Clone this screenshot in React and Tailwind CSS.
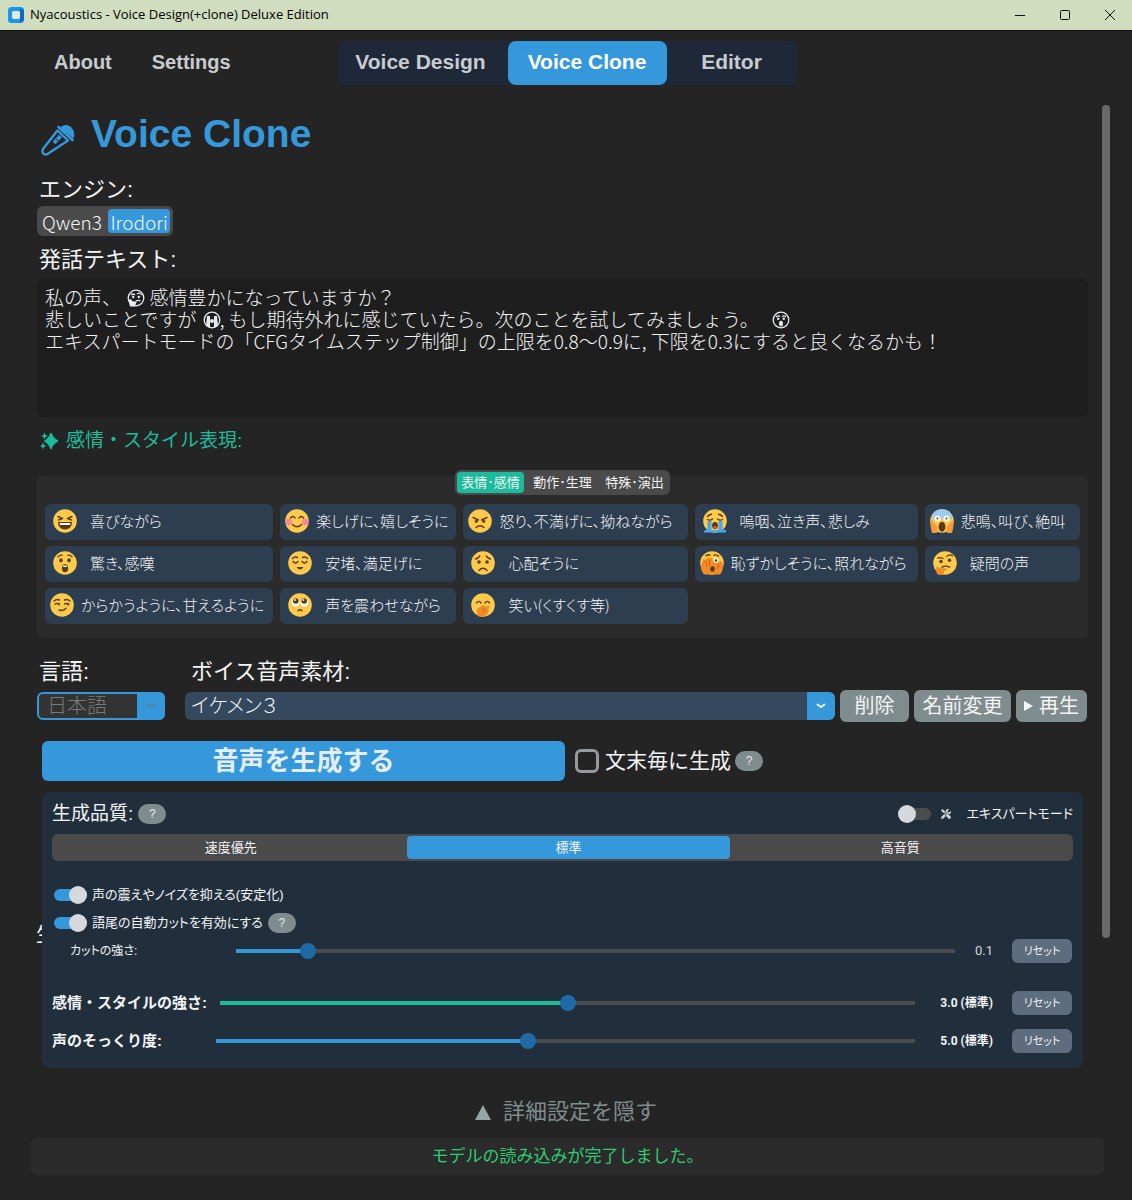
import React, { useState } from 'react';
import { FaTools } from 'react-icons/fa';

const EMOTIONS = [
  { face: 'laugh', label: '喜びながら' },
  { face: 'blush', label: '楽しげに、嬉しそうに' },
  { face: 'angry', label: '怒り、不満げに、拗ねながら' },
  { face: 'sob', label: '嗚咽、泣き声、悲しみ' },
  { face: 'scream', label: '悲鳴、叫び、絶叫' },
  { face: 'astonished', label: '驚き、感嘆' },
  { face: 'relieved', label: '安堵、満足げに' },
  { face: 'worried', label: '心配そうに' },
  { face: 'peek', label: '恥ずかしそうに、照れながら' },
  { face: 'thinking', label: '疑問の声' },
  { face: 'smirk', label: 'からかうように、甘えるように' },
  { face: 'pleading', label: '声を震わせながら' },
  { face: 'giggle', label: '笑い(くすくす等)' },
];

// 詰めて表示するボタン
const TIGHT = ['blush', 'angry', 'scream', 'peek', 'smirk'];

const SPEECH_TEXT =
  '私の声、　　感情豊かになっていますか？\n' +
  '悲しいことですが 　, もし期待外れに感じていたら。次のことを試してみましょう。\n' +
  'エキスパートモードの「CFGタイムステップ制御」の上限を0.8～0.9に, 下限を0.3にすると良くなるかも！';

const B = '#5b3a12';
const line = { fill: 'none', stroke: B, strokeWidth: 1.4, strokeLinecap: 'round', strokeLinejoin: 'round' };

const FACES = {
  laugh: (
    <>
      <path {...line} d="M5 7.5 L9.5 9.5 L5.5 11 M19 7.5 L14.5 9.5 L18.5 11" />
      <path fill={B} d="M5 13 H19 C19 17.5 16 20.5 12 20.5 C8 20.5 5 17.5 5 13Z" />
      <path fill="#fff" d="M6.5 14 H17.5 L17 16 H7Z" />
    </>
  ),
  blush: (
    <>
      <circle cx="3.8" cy="13" r="3.2" fill="#f7869a" />
      <circle cx="20.2" cy="13" r="3.2" fill="#f7869a" />
      <path {...line} d="M5.5 9 Q7.8 6 10 9 M14 9 Q16.2 6 18.5 9 M7.5 15.5 Q12 20 16.5 15.5" />
    </>
  ),
  angry: (
    <>
      <path {...line} d="M5 8.5 L10.5 11 M19 8.5 L13.5 11 M8 18.5 Q12 15 16 18.5" />
      <circle cx="8.3" cy="12.3" r="1.5" fill={B} />
      <circle cx="15.7" cy="12.3" r="1.5" fill={B} />
    </>
  ),
  sob: (
    <>
      <path {...line} d="M4.5 7.5 Q6 5.5 8.5 5.2 M19.5 7.5 Q18 5.5 15.5 5.2 M4.5 10.5 Q7 12 9.5 10 M19.5 10.5 Q17 12 14.5 10" />
      <path fill="#4aa9ea" d="M4.5 12 H8.5 V21 H23 V23.5 H1 V22 L4.5 20Z M15.5 12 H19.5 V20 L23 22 H15.5Z" />
      <ellipse cx="12" cy="16.5" rx="2.9" ry="3.5" fill={B} />
      <ellipse cx="12" cy="18.3" rx="1.8" ry="1.4" fill="#e4513d" />
    </>
  ),
  scream: (
    <>
      <path fill="#9fcaf0" d="M2 11 C1 3.5 6 0.2 12 0.2 C18 0.2 23 3.5 22 11 C17 7 14 9.5 12 9.5 C10 9.5 7 7 2 11Z" />
      <circle cx="7.5" cy="9.5" r="3" fill="#fff" />
      <circle cx="16.5" cy="9.5" r="3" fill="#fff" />
      <circle cx="7.5" cy="9.5" r="1" fill={B} />
      <circle cx="16.5" cy="9.5" r="1" fill={B} />
      <ellipse cx="12" cy="17.8" rx="3.4" ry="5" fill={B} />
      <path fill="#f79a3a" d="M0.5 12 Q2 10 3 13 L7.5 18 L7 24 H2 Q0 18 0.5 12Z M23.5 12 Q22 10 21 13 L16.5 18 L17 24 H22 Q24 18 23.5 12Z" />
    </>
  ),
  astonished: (
    <>
      <path {...line} d="M5 5.8 Q6.5 3.8 9 4.2 M19 5.8 Q17.5 3.8 15 4.2" />
      <ellipse cx="8" cy="9.3" rx="1.7" ry="2.1" fill={B} />
      <ellipse cx="16" cy="9.3" rx="1.7" ry="2.1" fill={B} />
      <ellipse cx="12" cy="17.3" rx="3.1" ry="4" fill={B} />
      <path fill="#fff" d="M10 14.6 H14 V16 H10Z" />
    </>
  ),
  relieved: (
    <>
      <path {...line} d="M4.5 7.5 Q6.5 5 9.5 6.5 M19.5 7.5 Q17.5 5 14.5 6.5 M5 10.5 Q7.5 13.5 10 10.5 M14 10.5 Q16.5 13.5 19 10.5" />
      <path fill={B} d="M8.5 16 H15.5 Q12 21 8.5 16Z" />
    </>
  ),
  worried: (
    <>
      <path {...line} d="M4.5 8 Q7 7.5 8.8 5 M19.5 8 Q17 7.5 15.2 5 M8 19.5 Q12 15 16 19.5" />
      <circle cx="8" cy="11" r="1.8" fill={B} />
      <circle cx="16" cy="11" r="1.8" fill={B} />
    </>
  ),
  peek: (
    <>
      <path {...line} d="M6 4.8 Q8 3.2 10 4.2 M14 4.2 Q16.5 3.2 18.5 5.2" />
      <path fill="#f28a25" d="M1.5 13 L3.5 7.5 L5.5 9 L7.5 6 L9.5 8 L12 6.5 L13 11 L15 9 L17 12 L21 9.5 L23 13 Q23.5 20 20 23.5 H4 Q0 19 1.5 13Z" />
      <circle cx="16" cy="9.5" r="2.4" fill="#fff" />
      <circle cx="16" cy="9.5" r="1.2" fill={B} />
      <ellipse cx="12.5" cy="18" rx="2.2" ry="2.8" fill={B} />
      <path fill="none" stroke="#c9621a" strokeWidth="0.9" d="M5.5 9.5 L7 16 M9.5 8.5 L9.5 15 M19 13 L17 18" />
    </>
  ),
  thinking: (
    <>
      <path {...line} d="M5 7 Q7.5 6 10 7.5 M14 5.2 Q16.5 2.8 19.5 4.8 M9 16.2 Q13 14 16.5 16.2" />
      <circle cx="8" cy="10.5" r="1.7" fill={B} />
      <circle cx="16.5" cy="9.3" r="1.7" fill={B} />
      <path fill="#f28a25" d="M3.5 16 Q5 14 6 17 L13.5 17.5 Q14.5 19 12.5 19.5 L11 20 Q11.5 24 7 24 Q2 24 3.5 16Z" />
    </>
  ),
  smirk: (
    <>
      <path {...line} d="M4 8 Q6.5 5.5 9.5 7 M20 8 Q17.5 5.5 14.5 7 M5 11 Q7.5 9.8 9.5 11 M14.5 11 Q17 9.8 19 11 M9 17 Q13.5 18.5 16 15.3" />
      <circle cx="8.8" cy="11.4" r="1" fill={B} />
      <circle cx="17.8" cy="11.4" r="1" fill={B} />
    </>
  ),
  pleading: (
    <>
      <circle cx="7.5" cy="9.5" r="4" fill="#fff" />
      <circle cx="16.5" cy="9.5" r="4" fill="#fff" />
      <circle cx="7.8" cy="8" r="2.8" fill={B} />
      <circle cx="16.2" cy="8" r="2.8" fill={B} />
      <circle cx="7" cy="7" r="0.9" fill="#fff" />
      <circle cx="15.4" cy="7" r="0.9" fill="#fff" />
      <path {...line} d="M10 17.8 Q12 15.8 14 17.8" />
    </>
  ),
  giggle: (
    <>
      <path {...line} d="M5.5 10 Q7.8 6.8 10 10 M14 10 Q16.2 6.8 18.5 10" />
      <path fill="#f28a25" d="M6 16 L12 12 Q14 12 13.5 14 L18 12.5 Q19 14 17.5 15.5 L17 20 Q14 24 9.5 24 Q5 23 6 16Z" />
      <path fill="none" stroke="#c9621a" strokeWidth="0.8" d="M11 16.5 L14 15 M11.5 18.5 L15 17" />
    </>
  ),
};

const Emoji = ({ face }) => (
  <svg viewBox="0 0 24 24" className="size-6 shrink-0" aria-hidden="true">
    <circle cx="12" cy="12" r="11.8" fill="#fdca4b" />
    {FACES[face]}
  </svg>
);

// テキスト欄の白黒絵文字
const MonoEmoji = ({ kind, className }) => (
  <svg viewBox="0 0 18 18" className={`pointer-events-none absolute size-[18px] ${className}`} aria-hidden="true">
    <circle cx="9" cy="9" r="7.8" fill="#1e1e1e" stroke="#e6ebf0" strokeWidth="1.3" />
    {kind === 'thinking' && (
      <>
        <path fill="none" stroke="#e6ebf0" strokeWidth="1.2" d="M4 6 Q6 4 8 6 M10 5 Q12.5 3 14.5 6 M8.5 12.5 Q11 10.5 13.5 12" />
        <circle cx="6.2" cy="8" r="1.2" fill="#e6ebf0" />
        <circle cx="11.8" cy="8" r="1.2" fill="#e6ebf0" />
        <path fill="#e6ebf0" d="M1.5 11 L4 10 L5 12 L9.5 13 L8 17.5 H3Z" />
      </>
    )}
    {kind === 'sob' && (
      <>
        <path fill="#e6ebf0" d="M4 5 H7 V16.5 L3 15Z M11 5 H14 L15 15 L11 16.5Z" />
        <circle cx="9" cy="10" r="2" fill="#e6ebf0" />
      </>
    )}
    {kind === 'astonished' && (
      <>
        <path fill="none" stroke="#e6ebf0" strokeWidth="1.2" d="M4 6 Q6 4 8 5.5 M10 5.5 Q12 4 14 6" />
        <circle cx="6.2" cy="7.8" r="1.2" fill="#e6ebf0" />
        <circle cx="11.8" cy="7.8" r="1.2" fill="#e6ebf0" />
        <ellipse cx="9" cy="12.6" rx="2" ry="2.8" fill="#e6ebf0" />
      </>
    )}
  </svg>
);

const MicIcon = () => (
  <svg viewBox="0 0 34 32" className="mt-3 h-8 w-[34px] shrink-0" aria-hidden="true">
    <path fill="none" stroke="#3498db" strokeWidth="2.4" strokeLinejoin="round" d="M16.5 6.5 L27 16.5 L6.5 30 Q4 31.200 2.200 29.500 Q0.800 27.500 2 25 Z" />
    <path fill="#3498db" d="M19 3.500 Q24 -1 29.500 2.500 Q35 8 32.500 14.500 Z" />
    <path stroke="#3498db" strokeWidth="2.600" strokeLinecap="round" d="M17.500 3 L31.500 16" />
    <path stroke="#3498db" strokeWidth="4" d="M19.500 12 L13 19" />
    <path stroke="#242424" strokeWidth="1" d="M15 15 L18 17.500" />
  </svg>
);

const Sparkles = () => (
  <svg viewBox="0 0 18 18" className="size-[18px]" fill="#1abc9c" aria-hidden="true">
    <path d="M11 1.5 Q12.8 7 18 9 Q12.8 11 11 16.5 Q9.2 11 5 9 Q9.2 7 11 1.5Z" stroke="#1abc9c" strokeWidth="1.6" strokeLinejoin="round" />
    <path d="M4.5 0.5 L5.5 3 L8 4 L5.5 5 L4.5 7.5 L3.5 5 L1 4 L3.5 3Z" />
    <path d="M3 10.5 L4 13 L6.5 14 L4 15 L3 17.5 L2 15 L0 14 L2 13Z" />
  </svg>
);

const Chevron = () => (
  <svg viewBox="0 0 10 6" className="h-[6px] w-[10px]" fill="none" stroke="currentColor" strokeWidth="2" strokeLinecap="round" strokeLinejoin="round" aria-hidden="true">
    <path d="M1.5 1.5 L5 4 L8.5 1.5" />
  </svg>
);

const HelpButton = () => (
  <button type="button" className="h-5 w-7 rounded-full bg-[#7f8c8d] text-xs leading-5 text-gray-200">
    ?
  </button>
);

const Switch = ({ id, defaultChecked }) => (
  <input
    id={id}
    type="checkbox"
    role="switch"
    defaultChecked={defaultChecked}
    className="relative h-[18px] w-[33px] shrink-0 appearance-none before:absolute before:inset-x-0 before:top-[3px] before:h-3 before:rounded-full before:bg-[#4a4d50] after:absolute after:left-0 after:top-0 after:size-[18px] after:rounded-full after:bg-[#d5d9de] checked:before:bg-[#3498db] checked:after:left-auto checked:after:right-0"
  />
);

const Slider = ({ id, min, max, step, initial, color }) => {
  const [value, setValue] = useState(initial);
  const ratio = (value - min) / (max - min);
  const stop = `calc(8px + (100% - 16px) * ${ratio})`;

  return (
    <input
      id={id}
      type="range"
      min={min}
      max={max}
      step={step}
      value={value}
      onChange={(e) => setValue(Number(e.target.value))}
      style={{ background: `linear-gradient(to right, ${color} ${stop}, #4a4d50 ${stop})` }}
      className="h-1 min-w-0 flex-1 appearance-none [&::-webkit-slider-thumb]:size-4 [&::-webkit-slider-thumb]:appearance-none [&::-webkit-slider-thumb]:rounded-full [&::-webkit-slider-thumb]:bg-[#1f6aa5]"
    />
  );
};

const ResetButton = () => (
  <button type="button" className="h-6 w-[60px] shrink-0 rounded-md bg-[#5d6d7e] text-[11px] font-normal leading-5 text-gray-100 [font-feature-settings:'palt']">
    リセット
  </button>
);

const App = () => {
  const [engine, setEngine] = useState('Irodori');
  const [category, setCategory] = useState('表情･感情');
  const [quality, setQuality] = useState('標準');

  return (
    <div className="flex min-h-screen flex-col bg-[#242424] font-['Liberation_Sans','Noto_Sans_CJK_JP',sans-serif] text-gray-100">
      {/* タイトルバー */}
      <header className="flex h-[31px] items-center border-b border-[#111] bg-[#d0debf] pl-2 text-black">
        <svg viewBox="0 0 16 16" className="size-4" aria-hidden="true">
          <rect width="16" height="16" rx="3.5" fill="#1c96e8" />
          <path d="M12 1 L16 3 V13 L12 16Z" fill="#0d6cc0" />
          <rect x="4" y="4" width="8" height="8" rx="2" fill="#e3ecd9" />
        </svg>
        <span className="ml-[6px] font-['Open_Sans',sans-serif] text-[13px]">Nyacoustics - Voice Design(+clone) Deluxe Edition</span>
        <div className="ml-auto flex">
          <button type="button" aria-label="最小化" className="flex w-[45px] justify-center">
            <svg viewBox="0 0 12 12" className="size-3" stroke="#111" fill="none"><path d="M1 6.5 H11" /></svg>
          </button>
          <button type="button" aria-label="最大化" className="flex w-[45px] justify-center">
            <svg viewBox="0 0 12 12" className="size-3" stroke="#111" fill="none"><rect x="1.5" y="1.5" width="9" height="9" rx="1" /></svg>
          </button>
          <button type="button" aria-label="閉じる" className="flex w-[45px] justify-center">
            <svg viewBox="0 0 12 12" className="size-3" stroke="#111" fill="none"><path d="M1 1 L11 11 M11 1 L1 11" /></svg>
          </button>
        </div>
      </header>

      {/* ナビゲーション */}
      <nav className="mt-[10px] grid h-11 grid-cols-[1fr_auto_1fr] pl-[2px] text-xl font-bold text-[#c8ccd0]">
        <div className="flex items-center gap-10 pb-[2px] pl-[52px]">
          <button type="button">About</button>
          <button type="button">Settings</button>
        </div>
        <div className="flex rounded-md bg-[#1f2838] text-[21px]">
          <button type="button" className="w-[170px] pb-[2px] pr-1">Voice Design</button>
          <button type="button" className="w-[159px] rounded-lg bg-[#3498db] pb-[2px] text-white">Voice Clone</button>
          <button type="button" className="w-[130px] pb-[2px]">Editor</button>
        </div>
      </nav>

      <main className="relative flex gap-[14px] pl-[37px] pr-[22px]">
        <div className="min-w-0 flex-1">
          <h1 className="mt-[27px] flex h-11 items-center gap-4 pl-1 text-[39px] font-bold leading-[44px] text-[#3498db]">
            <MicIcon />
            Voice Clone
          </h1>

          {/* エンジン */}
          <p className="mt-5 pl-[2px] text-[22px] leading-7">エンジン:</p>
          <div className="mt-[2px] flex h-[30px] w-[136px] justify-between rounded-md bg-[#4a4a4a] p-[3px] font-['Noto_Sans_CJK_JP',sans-serif] text-[19px] font-light leading-[23px]">
            {['Qwen3', 'Irodori'].map((name) => (
              <button
                key={name}
                type="button"
                onClick={() => setEngine(name)}
                className={`rounded px-[2px] ${engine === name ? 'bg-[#3498db]' : ''}`}
              >
                {name}
              </button>
            ))}
          </div>

          {/* 発話テキスト */}
          <label htmlFor="speech" className="mt-[10px] block pl-[2px] text-[22px] leading-7">発話テキスト:</label>
          <div className="relative mt-1">
            <textarea
              id="speech"
              defaultValue={SPEECH_TEXT}
              className="block h-[139px] w-full resize-none rounded-md bg-[#1e1e1e] px-2 py-2 font-['Noto_Sans_CJK_JP',sans-serif] text-[19px] font-light leading-[22px] outline-none"
            />
            <MonoEmoji kind="thinking" className="left-[90px] top-[11px]" />
            <MonoEmoji kind="sob" className="left-[166px] top-[33px]" />
            <MonoEmoji kind="astonished" className="left-[735px] top-[33px]" />
          </div>

          {/* 感情・スタイル */}
          <h2 className="mt-[10px] flex items-center gap-2 pl-[3px] text-[19px] leading-7 text-[#1abc9c]">
            <Sparkles />
            感情・スタイル表現:
          </h2>
          <section className="mt-[21px] rounded-md bg-[#2b2b2b] px-2 pb-[14px]">
            <div className="flex justify-center">
              <div className="-mt-[6px] flex h-[25px] gap-[5px] rounded-md bg-[#4a4a4a] p-[2px] text-[13px] leading-5 [font-feature-settings:'palt']">
                {['表情･感情', '動作･生理', '特殊･演出'].map((name) => (
                  <button
                    key={name}
                    type="button"
                    onClick={() => setCategory(name)}
                    className={`w-[67px] rounded ${category === name ? 'bg-[#1abc9c]' : ''}`}
                  >
                    {name}
                  </button>
                ))}
              </div>
            </div>
            <div className="mt-[9px] grid grid-cols-[228fr_176fr_224fr_223fr_155fr] gap-x-[7px] gap-y-[6px]">
              {EMOTIONS.map(({ face, label }) => (
                <button
                  key={face}
                  type="button"
                  className={`flex h-9 min-w-0 items-center whitespace-nowrap rounded-md bg-[#2c3e50] pb-[2px] font-['Noto_Sans_CJK_JP',sans-serif] text-[15px] font-light [font-feature-settings:'palt'] ${TIGHT.includes(face) ? 'gap-[7px] pl-[5px]' : 'gap-[13px] pl-2'}`}
                >
                  <Emoji face={face} />
                  {label}
                </button>
              ))}
            </div>
          </section>

          {/* 言語とボイス */}
          <div className="mt-5 flex gap-5 pr-[1px]">
            <div className="w-32">
              <label htmlFor="language" className="block pl-[2px] text-[22px] leading-7">言語:</label>
              <div className="relative mt-[6px]">
                <select id="language" disabled className="block h-7 w-full appearance-none rounded-md border-2 border-[#3498db] bg-[#333] px-2 text-[20px] font-light leading-6 text-[#7a7a7a] opacity-100">
                  <option>日本語</option>
                </select>
                <span className="pointer-events-none absolute inset-y-0 right-0 flex w-7 items-center justify-center rounded-r-md bg-[#3498db] text-[#5f7f99]">
                  <Chevron />
                </span>
              </div>
            </div>
            <div className="flex min-w-0 flex-1 items-end gap-[5px]">
              <div className="min-w-0 flex-1 pb-[2px]">
                <label htmlFor="voice" className="block pl-[6px] text-[22px] leading-7">ボイス音声素材:</label>
                <div className="relative mt-[6px]">
                  <select id="voice" className="block h-7 w-full appearance-none rounded-md bg-[#34495e] px-[6px] text-[20px] font-light leading-7 [font-feature-settings:'palt']">
                    <option>イケメン３</option>
                  </select>
                  <span className="pointer-events-none absolute inset-y-0 right-0 flex w-7 items-center justify-center rounded-r-md bg-[#3498db]">
                    <Chevron />
                  </span>
                </div>
              </div>
              <button type="button" className="h-8 w-[69px] rounded-md bg-[#7f8c8d] text-[20px] leading-7">削除</button>
              <button type="button" className="h-8 w-[97px] rounded-md bg-[#7f8c8d] text-[20px] leading-7">名前変更</button>
              <button type="button" className="flex h-8 w-[71px] items-center justify-center gap-[6px] rounded-md bg-[#7f8c8d] text-[20px] leading-7">
                <svg viewBox="0 0 9 10" className="h-[10px] w-[9px]" fill="currentColor" aria-hidden="true"><path d="M0 0 L9 5 L0 10Z" /></svg>
                再生
              </button>
            </div>
          </div>

          {/* 生成ボタン */}
          <div className="mt-[19px] flex items-center pl-[5px]">
            <button type="button" className="h-10 w-1/2 rounded-md bg-[#3498db] text-[26px] font-bold leading-9 text-[#e4eefa]">
              音声を生成する
            </button>
            <input id="per-sentence" type="checkbox" className="ml-[10px] size-6 appearance-none rounded-md border-[3px] border-[#949a9f] checked:bg-[#3498db]" />
            <label htmlFor="per-sentence" className="ml-[6px] mr-1 text-[21px] leading-7">文末毎に生成</label>
            <HelpButton />
          </div>

          {/* 詳細設定 */}
          <span className="absolute left-[36px] top-[838px] text-xl leading-6" aria-hidden="true">生</span>
          <section className="relative ml-[5px] mr-[5px] mt-[11px] rounded-lg bg-[#212f3d] px-[10px] pb-[13px] pt-2">
            <div className="flex h-7 items-center">
              <h2 className="mr-[5px] text-[19px] leading-7">生成品質:</h2>
              <HelpButton />
              <div className="ml-auto flex items-center text-[13px] [font-feature-settings:'palt']">
                <Switch id="expert" />
                <FaTools className="ml-[10px] mr-4 size-[10px] text-gray-300" />
                <label htmlFor="expert">エキスパートモード</label>
              </div>
            </div>
            <div className="mt-[6px] grid h-[27px] grid-cols-[353fr_322fr_341fr] rounded-md bg-[#4a4a4a] p-[2px] text-[13px] leading-5">
              {['速度優先', '標準', '高音質'].map((name) => (
                <button
                  key={name}
                  type="button"
                  onClick={() => setQuality(name)}
                  className={`rounded-sm ${quality === name ? 'bg-[#3498db]' : ''}`}
                >
                  {name}
                </button>
              ))}
            </div>

            <div className="mt-5 flex h-7 items-center gap-[5px] pl-[2px] text-[13px] [font-feature-settings:'palt']">
              <Switch id="stabilize" defaultChecked />
              <label htmlFor="stabilize">声の震えやノイズを抑える(安定化)</label>
            </div>
            <div className="flex h-7 items-center gap-[5px] pl-[2px] text-[13px] [font-feature-settings:'palt']">
              <Switch id="tail-cut" defaultChecked />
              <label htmlFor="tail-cut">語尾の自動カットを有効にする</label>
              <HelpButton />
            </div>
            <div className="flex h-7 items-center pl-[18px] pr-[1px] text-[13px]">
              <label htmlFor="cut" className="w-[166px] text-xs [font-feature-settings:'palt']">カットの強さ:</label>
              <Slider id="cut" min={0.01} max={1} step={0.01} initial={0.1} color="#3498db" />
              <output htmlFor="cut" className="mr-[19px] w-[38px] text-right font-['Roboto',sans-serif] text-gray-300">0.1</output>
              <ResetButton />
            </div>
            <div className="mt-6 flex h-7 items-center pr-[1px] text-[15px] font-bold">
              <label htmlFor="style" className="w-[168px]">感情・スタイルの強さ:</label>
              <Slider id="style" min={1} max={5} step={0.1} initial={3} color="#1abc9c" />
              <output htmlFor="style" className="mr-[19px] w-[78px] text-right font-['Roboto','Noto_Sans_CJK_JP',sans-serif] text-xs">3.0 (標準)</output>
              <ResetButton />
            </div>
            <div className="mt-[10px] flex h-7 items-center pr-[1px] text-[15px] font-bold">
              <label htmlFor="similarity" className="w-[164px]">声のそっくり度:</label>
              <Slider id="similarity" min={1} max={10} step={0.1} initial={5} color="#3498db" />
              <output htmlFor="similarity" className="mr-[19px] w-[78px] text-right font-['Roboto','Noto_Sans_CJK_JP',sans-serif] text-xs">5.0 (標準)</output>
              <ResetButton />
            </div>
          </section>
        </div>

        {/* スクロールバー */}
        <div className="w-2 pt-5">
          <div className="h-[calc(100%-130px)] rounded-full bg-[#696969]" />
        </div>
      </main>

      <button type="button" className="mt-[30px] flex items-center justify-center gap-3 text-[22px] leading-7 text-[#7f8c8d]">
        <svg viewBox="0 0 16 15" className="h-[15px] w-4" fill="#95a5a6" aria-hidden="true"><path d="M8 0 L16 15 H0Z" /></svg>
        詳細設定を隠す
      </button>
      <p role="status" className="mb-6 ml-[31px] mr-7 mt-3 rounded-md bg-[#2b2b2b] text-center text-[17px] leading-[37px] text-[#2ecc71]">
        モデルの読み込みが完了しました。
      </p>
    </div>
  );
};

export default App;
